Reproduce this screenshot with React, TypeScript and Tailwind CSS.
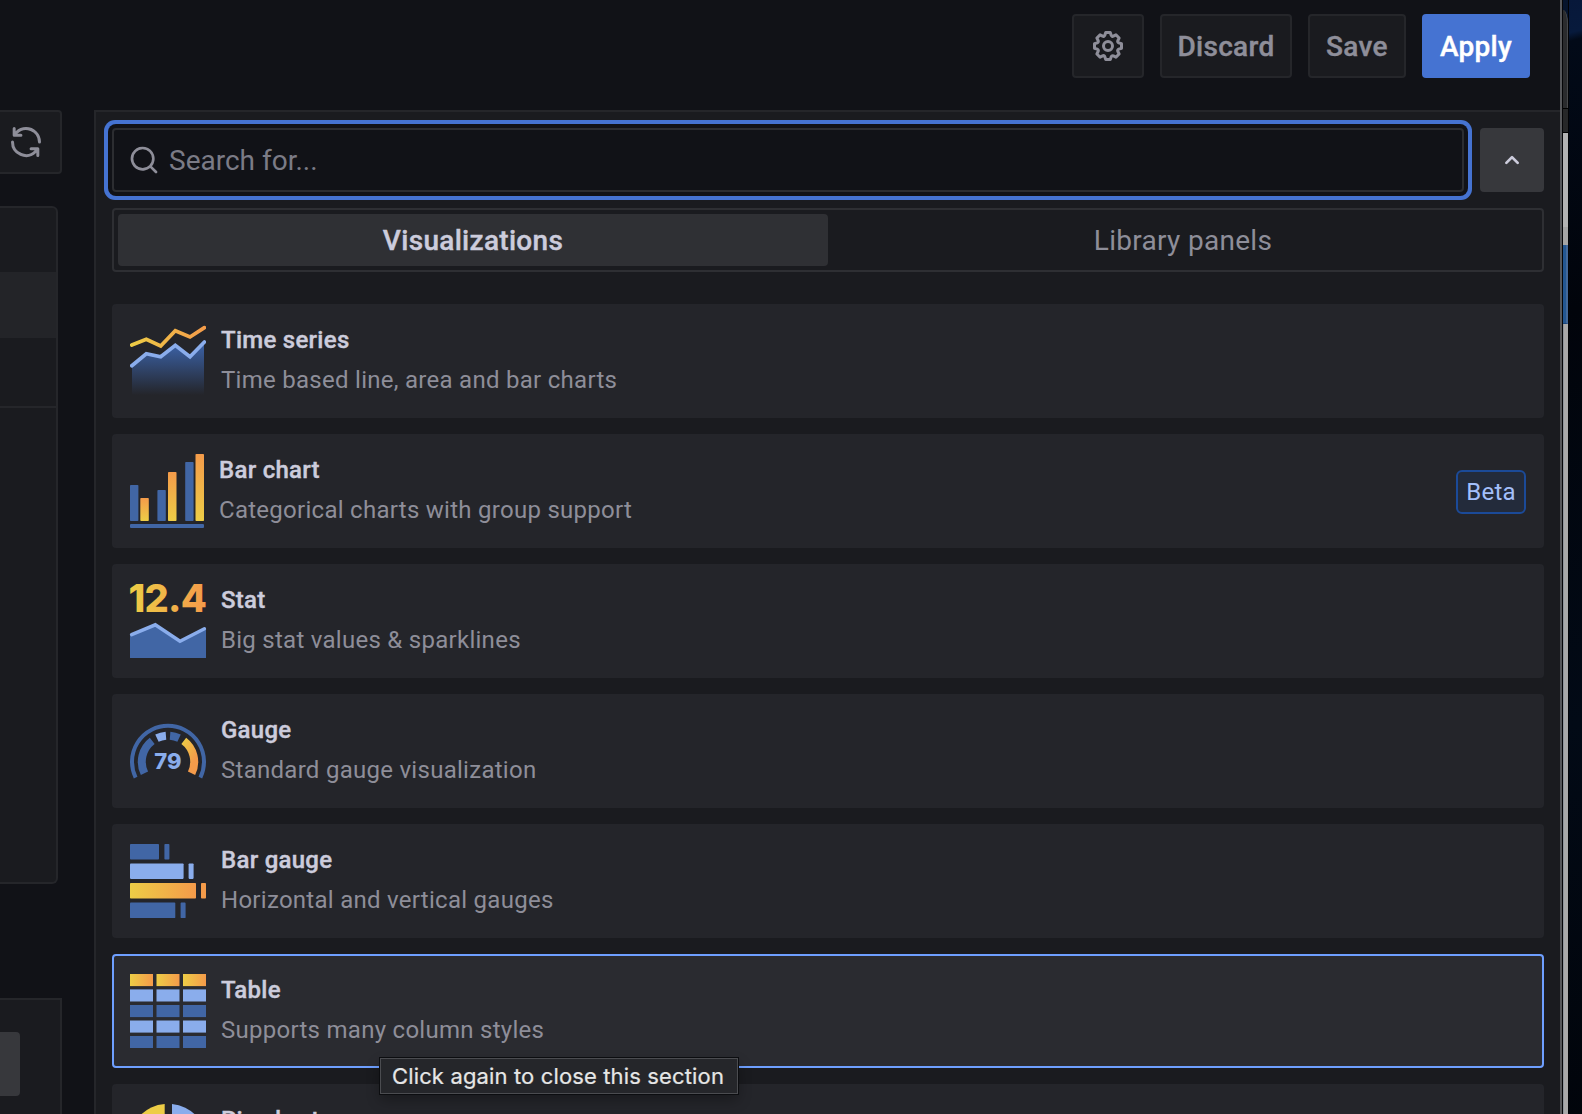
import React from 'react';

const COG =
  'M21.32,9.55l-1.89-.63.89-1.78A1,1,0,0,0,20.13,6L18,3.87a1,1,0,0,0-1.15-.19l-1.78.89-.63-1.89A1,1,0,0,0,13.5,2h-3a1,1,0,0,0-.95.68L8.92,4.57,7.14,3.68A1,1,0,0,0,6,3.87L3.87,6a1,1,0,0,0-.19,1.15l.89,1.78-1.89.63A1,1,0,0,0,2,10.5v3a1,1,0,0,0,.68.95l1.89.63-.89,1.78A1,1,0,0,0,3.87,18L6,20.13a1,1,0,0,0,1.15.19l1.78-.89.63,1.89a1,1,0,0,0,.95.68h3a1,1,0,0,0,.95-.68l.63-1.89,1.78.89A1,1,0,0,0,18,20.13L20.13,18a1,1,0,0,0,.19-1.15l-.89-1.78,1.89-.63A1,1,0,0,0,22,13.5v-3A1,1,0,0,0,21.32,9.55ZM20,12.78l-1.2.4A2,2,0,0,0,17.64,16l.57,1.14-1.1,1.1L16,17.64a2,2,0,0,0-2.79,1.16l-.4,1.2H11.22l-.4-1.2A2,2,0,0,0,8,17.64l-1.14.57-1.1-1.1L6.36,16A2,2,0,0,0,5.2,13.18L4,12.78V11.22l1.2-.4A2,2,0,0,0,6.36,8L5.79,6.89l1.1-1.1L8,6.36A2,2,0,0,0,10.82,5.2l.4-1.2h1.56l.4,1.2A2,2,0,0,0,16,6.36l1.14-.57,1.1,1.1L17.64,8a2,2,0,0,0,1.16,2.79l1.2.4ZM12,8a4,4,0,1,0,4,4A4,4,0,0,0,12,8Zm0,6a2,2,0,1,1,2-2A2,2,0,0,1,12,14Z';
const SYNC =
  'M19.91,15.51H15.38a1,1,0,0,0,0,2h2.4A8,8,0,0,1,4,12a1,1,0,0,0-2,0,10,10,0,0,0,16.88,7.23V21a1,1,0,0,0,2,0V16.5A1,1,0,0,0,19.91,15.51ZM12,2A10,10,0,0,0,5.12,4.77V3a1,1,0,0,0-2,0V7.5a1,1,0,0,0,1,1h4.5a1,1,0,0,0,0-2H6.22A8,8,0,0,1,20,12a1,1,0,0,0,2,0A10,10,0,0,0,12,2Z';
const SEARCH =
  'M21.71,20.29,18,16.61A9,9,0,1,0,16.61,18l3.68,3.68a1,1,0,0,0,1.42,0A1,1,0,0,0,21.71,20.29ZM11,18a7,7,0,1,1,7-7A7,7,0,0,1,11,18Z';
const ANGLE_UP =
  'M17,13.41,12.71,9.17a1,1,0,0,0-1.42,0L7.05,13.41a1,1,0,0,0,0,1.42,1,1,0,0,0,1.41,0L12,11.29l3.54,3.54a1,1,0,0,0,.7.29,1,1,0,0,0,.71-.29A1,1,0,0,0,17,13.41Z';

const BLUE = '#4166a5';
const LIGHT = '#8aadec';

function Icon({ d, className }: { d: string; className: string }) {
  return (
    <svg viewBox="0 0 24 24" fill="currentColor" className={className}>
      <path d={d} />
    </svg>
  );
}

function WarmGradient({ id, vertical = false }: { id: string; vertical?: boolean }) {
  return (
    <linearGradient id={id} x1="0" y1={vertical ? '1' : '0'} x2={vertical ? '0' : '1'} y2="0">
      <stop offset="0" stopColor="#edcd46" />
      <stop offset="1" stopColor="#f49b4a" />
    </linearGradient>
  );
}

function TimeSeriesIcon() {
  return (
    <svg width="76" height="74" viewBox="0 0 76 74" fill="none" className="shrink-0">
      <defs>
        <linearGradient id="ts-line" gradientUnits="userSpaceOnUse" x1="0" y1="0" x2="76" y2="0">
          <stop offset="0" stopColor="#edcd46" />
          <stop offset="1" stopColor="#f49b4a" />
        </linearGradient>
        <linearGradient id="ts-area" gradientUnits="userSpaceOnUse" x1="0" y1="18" x2="0" y2="71">
          <stop offset="0" stopColor="#3c64ab" />
          <stop offset="1" stopColor="#3c64ab" stopOpacity="0" />
        </linearGradient>
      </defs>
      <path d="M2 41.7L16.3 29.7L30.7 32.7L45.3 21.3L60 32.7L74 18.5V71H2Z" fill="url(#ts-area)" />
      <path d="M1.8 21L16.3 15.3L30.7 22L45.3 6.7L60 13L74.4 3.6" stroke="url(#ts-line)" strokeWidth="3.7" strokeLinecap="round" />
      <path d="M1.8 41.7L16.3 29.7L30.7 32.7L45.3 21.3L60 32.7L74.4 18" stroke={LIGHT} strokeWidth="3.7" strokeLinecap="round" />
    </svg>
  );
}

function BarChartIcon() {
  const cold = [[0, 31], [27.4, 36], [55.2, 8]];
  const warm = [[10.3, 44], [38, 18], [65.5, 0]];
  return (
    <svg width="74" height="74" viewBox="0 0 74 74" className="shrink-0">
      <defs><WarmGradient id="bc" vertical /></defs>
      {cold.map(([x, y]) => <rect key={x} x={x} y={y} width="8.4" height={67 - y} rx="0.8" fill={BLUE} />)}
      {warm.map(([x, y]) => <rect key={x} x={x} y={y} width="8.5" height={67 - y} rx="0.8" fill="url(#bc)" />)}
      <rect y="70" width="74" height="4" rx="1" fill={BLUE} />
    </svg>
  );
}

function StatIcon() {
  return (
    <svg width="76" height="74" viewBox="0 0 76 74" className="shrink-0 overflow-visible">
      <defs>
        <linearGradient id="st" gradientUnits="userSpaceOnUse" x1="0" y1="0" x2="76" y2="0">
          <stop offset="0" stopColor="#edcd46" />
          <stop offset="1" stopColor="#f49b4a" />
        </linearGradient>
      </defs>
      <text x="-1.5" y="27.6" textLength="78.5" fill="url(#st)" className="font-['Inter',sans-serif] text-[38px] font-extrabold tracking-normal">12.4</text>
      <path d="M0 51.5L25.3 40.5L50 57.3L76 44V74H0Z" fill={BLUE} />
      <path d="M1.6 50.7L25.3 40.8L50 57.2L74.4 44.8" fill="none" stroke={LIGHT} strokeWidth="3.5" strokeLinecap="round" />
    </svg>
  );
}

function arc(r: number, from: number, to: number) {
  const point = (a: number) => {
    const t = (a * Math.PI) / 180;
    return `${(38 + r * Math.cos(t)).toFixed(2)} ${(47.8 - r * Math.sin(t)).toFixed(2)}`;
  };
  return `M${point(from)}A${r} ${r} 0 ${from - to > 180 ? 1 : 0} 1 ${point(to)}`;
}

function GaugeIcon() {
  return (
    <svg width="76" height="74" viewBox="0 0 76 74" fill="none" className="shrink-0">
      <defs>
        <linearGradient id="ga" gradientUnits="userSpaceOnUse" x1="50" y1="30" x2="68" y2="40">
          <stop offset="0" stopColor="#edcd46" />
          <stop offset="1" stopColor="#f49b4a" />
        </linearGradient>
      </defs>
      <path d={arc(36, 206, -26)} stroke={BLUE} strokeWidth="4" />
      <path d={arc(26.2, 206, 127)} stroke={BLUE} strokeWidth="8" />
      <path d={arc(26.2, 115, 94.5)} stroke={LIGHT} strokeWidth="8" />
      <path d={arc(26.2, 85.5, 65)} stroke={BLUE} strokeWidth="8" />
      <path d={arc(26.2, 53, -26)} stroke="url(#ga)" strokeWidth="8" />
      <text x="38" y="55.4" textAnchor="middle" fill={LIGHT} className="font-['Inter',sans-serif] text-[22px] font-extrabold tracking-normal">79</text>
    </svg>
  );
}

function BarGaugeIcon() {
  const rows = [
    [0, 29, 34.4, BLUE],
    [19.4, 53.6, 58.6, LIGHT],
    [39, 66, 71, 'url(#bg)'],
    [58.6, 45.3, 50.6, BLUE],
  ] as const;
  return (
    <svg width="76" height="74" viewBox="0 0 76 74" className="shrink-0">
      <defs><WarmGradient id="bg" /></defs>
      {rows.map(([y, w, x, fill]) => (
        <g key={y}>
          <rect y={y} width={w} height="15.5" rx="0.8" fill={fill} />
          <rect x={x} y={y} width="5" height="15.5" rx="0.8" fill={y === 39 ? '#f49b4a' : fill} />
        </g>
      ))}
    </svg>
  );
}

function TableIcon() {
  const rows = [[0, 'url(#tb)'], [15.4, LIGHT], [31, BLUE], [46.5, LIGHT], [62, BLUE]] as const;
  return (
    <svg width="76" height="74" viewBox="0 0 76 74" className="shrink-0">
      <defs><WarmGradient id="tb" /></defs>
      {rows.map(([y, fill]) =>
        [0, 26.5, 53].map((x) => <rect key={`${x}-${y}`} x={x} y={y} width="23" height="12.1" fill={fill} />),
      )}
    </svg>
  );
}

function PieIcon() {
  return (
    <svg width="76" height="74" viewBox="0 0 76 74" className="shrink-0">
      <path d="M34.7 0A37 37 0 0 0 0 37H34.7Z" fill="#edcd46" />
      <path d="M42 0A37 37 0 0 1 76 37L42 37Z" fill={LIGHT} />
    </svg>
  );
}

const cards = [
  { title: 'Time series', text: 'Time based line, area and bar charts', icon: <TimeSeriesIcon /> },
  { title: 'Bar chart', text: 'Categorical charts with group support', icon: <BarChartIcon />, beta: true },
  { title: 'Stat', text: 'Big stat values & sparklines', icon: <StatIcon /> },
  { title: 'Gauge', text: 'Standard gauge visualization', icon: <GaugeIcon /> },
  { title: 'Bar gauge', text: 'Horizontal and vertical gauges', icon: <BarGaugeIcon /> },
  { title: 'Table', text: 'Supports many column styles', icon: <TableIcon />, selected: true },
  { title: 'Pie chart', text: '', icon: <PieIcon /> },
];

function Header() {
  const plain = 'flex h-16 items-center justify-center rounded-sm border-2 border-[#25262a] bg-[#1a1b1f] text-[#8e8e99]';
  return (
    <header className="flex h-[110px] shrink-0 justify-end gap-4 pt-3.5 pr-[30px] text-[28px] font-medium tracking-[0.01071em] [-webkit-text-stroke:0.4px]">
      <button className={`${plain} w-[72px]`}><Icon d={COG} className="size-9" /></button>
      <button className={`${plain} w-[132px] pt-0.5`}>Discard</button>
      <button className={`${plain} w-[98px] pt-0.5`}>Save</button>
      <button className="flex h-16 w-[108px] items-center justify-center rounded-sm bg-[#4573d2] pt-0.5 text-white">Apply</button>
    </header>
  );
}

function LeftColumn() {
  return (
    <aside className="flex w-[94px] shrink-0 flex-col items-start">
      <div className="flex h-16 w-[62px] items-center rounded-r-sm border-2 border-l-0 border-[#25262a] bg-[#1a1b1f] pl-2 text-[#8e8e99]">
        <Icon d={SYNC} className="size-9" />
      </div>
      <div className="mt-8 h-[678px] w-[58px] rounded-r-md border-2 border-l-0 border-[#25262a] bg-[#1a1b1f] pt-16">
        <div className="h-[66px] bg-[#232428]" />
        <div className="h-[70px] border-b-2 border-[#25262a]" />
      </div>
      <div className="mt-[114px] w-[62px] grow border-2 border-b-0 border-l-0 border-[#25262a] bg-[#1a1b1f] pt-8">
        <div className="h-16 w-5 rounded-r-sm bg-[#37383c]" />
      </div>
    </aside>
  );
}

function Picker() {
  return (
    <main className="min-w-0 grow border-t-2 border-l-2 border-[#25262a] bg-[#1a1b1f] pt-4 pr-4 pl-4">
      <div className="flex gap-4">
        <div className="flex h-16 grow items-center gap-[9px] rounded-sm border-2 border-[#2c2d31] bg-[#111217] pl-3.5 text-[28px] text-[#7b7b86] shadow-[0_0_0_4px_#111217,0_0_0_8px_#4573d2]">
          <Icon d={SEARCH} className="size-8 text-[#8e8e99]" />
          <span className="pt-0.5 tracking-normal">Search for...</span>
        </div>
        <button className="flex size-16 items-center justify-center rounded-sm bg-[#37383c] text-[#ccccdc]">
          <Icon d={ANGLE_UP} className="size-8" />
        </button>
      </div>
      <div className="mt-4 flex h-16 rounded-sm border-2 border-[#2e2f33] p-1 text-[28px] tracking-[0.01071em]">
        <div className="flex flex-1 items-center justify-center rounded-sm bg-[#2f3034] pt-0.5 font-medium text-[#ccccdc] [-webkit-text-stroke:0.4px]">Visualizations</div>
        <div className="flex flex-1 items-center justify-center pt-0.5 text-[#8e8e99]">Library panels</div>
      </div>
      <div className="mt-8 flex flex-col gap-4">
        {cards.map((c) => (
          <section
            key={c.title}
            className={`flex h-[114px] shrink-0 rounded-sm border-2 px-4 ${c.selected ? 'border-[#6e9fff] bg-[#2a2b30]' : 'border-[#24252a] bg-[#24252a]'}`}
          >
            <div className="pt-[18px]">{c.icon}</div>
            <div className="ml-[15px] grow pt-3.5 text-[24px] leading-10 tracking-[0.0115em]">
              <h3 className="font-medium text-[#ccccdc] [-webkit-text-stroke:0.4px]">{c.title}</h3>
              <p className="text-[#8e8e99]">{c.text}</p>
            </div>
            {c.beta && (
              <span className="mt-[34px] flex h-11 w-[70px] items-center justify-center rounded-md border-2 border-[#1b4a98] bg-[#232b3b] text-[24px] tracking-[0.01071em] text-[#a3bffa]">
                Beta
              </span>
            )}
          </section>
        ))}
      </div>
    </main>
  );
}

function DesktopEdge() {
  return (
    <div className="flex w-[22px] shrink-0 bg-[#02060f]">
      <div className="w-0.5 bg-[#57585b]" />
      <div className="w-px bg-[#050507]" />
      <div className="flex w-[5px] flex-col bg-[#06142c]">
        <div className="h-2.5" />
        <div className="h-[98px] rounded-tr-[5px_14px] border-r border-[#48494b] bg-[#2a2b2d]" />
        <div className="h-[25px] border-y border-black bg-[#262728]" />
        <div className="h-[94px] bg-[#b3b3b3]" />
        <div className="h-[18px] bg-[#a5a5a5]" />
        <div className="h-[79px] border-r-2 border-b border-r-[#44699a] border-b-[#1a4478] bg-[#235792]" />
        <div className="grow border-l border-[#8f959b] bg-[#a9a9a9]" />
      </div>
      <div className="grow border-l border-[#010205] bg-[linear-gradient(165deg,#07183a_0px,#071a3c_32px,#020a18_40px,#01040b_300px,#020a16_700px,#01040a_1114px)]" />
    </div>
  );
}

export default function App() {
  return (
    <div className="relative flex h-[1114px] w-[1582px] overflow-hidden bg-[#111217] font-['Roboto',sans-serif]">
      <div className="flex w-[1560px] shrink-0 flex-col">
        <Header />
        <div className="flex min-h-0 grow">
          <LeftColumn />
          <Picker />
        </div>
      </div>
      <DesktopEdge />
      <div className="absolute top-[1058px] left-[380px] flex h-9 w-[358px] items-center border border-[#4b4c50] bg-[#25262a] pl-[11px] font-['Inter',sans-serif] text-[22px] tracking-[0.14px] whitespace-nowrap text-[#e6e6e6] shadow-[0_0_0_1px_#0c0d10,0_6px_14px_rgba(0,0,0,0.3)] [-webkit-text-stroke:0.2px]">
        Click again to close this section
      </div>
    </div>
  );
}
